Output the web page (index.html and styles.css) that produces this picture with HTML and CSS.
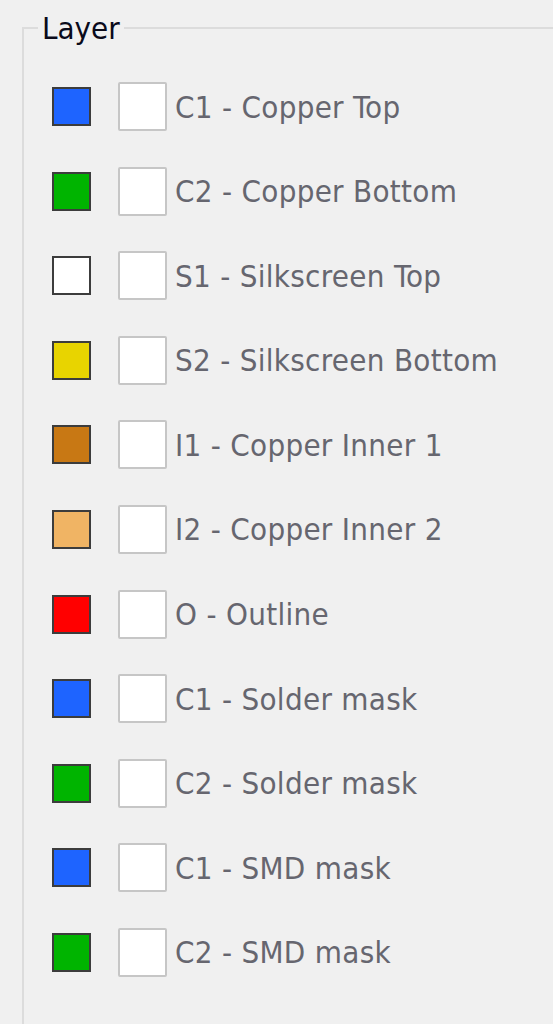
FILE: index.html
```html
<!DOCTYPE html>
<html>
<head>
<meta charset="utf-8">
<link rel="stylesheet" href="styles.css">
</head>
<body>
<fieldset class="group">
  <legend class="group-title">Layer</legend>
  <div class="row"><span class="swatch c-blue"></span><span class="check"></span><span class="label">C1 - Copper Top</span></div>
  <div class="row"><span class="swatch c-green"></span><span class="check"></span><span class="label">C2 - Copper Bottom</span></div>
  <div class="row"><span class="swatch c-white"></span><span class="check"></span><span class="label">S1 - Silkscreen Top</span></div>
  <div class="row"><span class="swatch c-yellow"></span><span class="check"></span><span class="label">S2 - Silkscreen Bottom</span></div>
  <div class="row"><span class="swatch c-brown"></span><span class="check"></span><span class="label">I1 - Copper Inner 1</span></div>
  <div class="row"><span class="swatch c-tan"></span><span class="check"></span><span class="label">I2 - Copper Inner 2</span></div>
  <div class="row"><span class="swatch c-red"></span><span class="check"></span><span class="label">O - Outline</span></div>
  <div class="row"><span class="swatch c-blue"></span><span class="check"></span><span class="label">C1 - Solder mask</span></div>
  <div class="row"><span class="swatch c-green"></span><span class="check"></span><span class="label">C2 - Solder mask</span></div>
  <div class="row"><span class="swatch c-blue"></span><span class="check"></span><span class="label">C1 - SMD mask</span></div>
  <div class="row"><span class="swatch c-green"></span><span class="check"></span><span class="label">C2 - SMD mask</span></div>
</fieldset>
</body>
</html>
```
FILE: styles.css
```css
html, body {
  margin: 0;
  padding: 0;
  background: #f0f0f0;
  overflow: hidden;
}
body {
  width: 553px;
  height: 1024px;
  font-family: "DejaVu Sans Condensed", "DejaVu Sans", sans-serif;
}
.group {
  margin: 13px 0 0 22px;
  height: 1011px;
  border: 2px solid #dcdcdc;
  border-right: none;
  border-bottom: none;
  padding: 0 0 0 28px;
  box-sizing: border-box;
  display: flex;
  flex-direction: column;
  gap: 35.6px;
}
.group-title {
  margin-left: -14px;
  padding: 0 4px;
  font-size: 31px;
  line-height: 30px;
  color: #0a0a1a;
}
.row {
  display: flex;
  align-items: center;
  height: 49px;
}
.row:first-of-type {
  margin-top: 39px;
}
.swatch {
  width: 39px;
  height: 39px;
  box-sizing: border-box;
  border: 2px solid #3c3c3c;
  flex: none;
}
.check {
  width: 49px;
  height: 49px;
  box-sizing: border-box;
  border: 2px solid #c6c6c6;
  border-radius: 2px;
  background: #ffffff;
  margin-left: 27px;
  flex: none;
}
.label {
  margin-left: 8px;
  font-size: 31px;
  letter-spacing: 0.3px;
  color: #66666f;
  white-space: nowrap;
}
.c-blue { background: #1e64ff; }
.c-green { background: #00b400; }
.c-white { background: #ffffff; }
.c-yellow { background: #e8d400; }
.c-brown { background: #c87814; }
.c-tan { background: #f0b464; }
.c-red { background: #ff0000; }
```
